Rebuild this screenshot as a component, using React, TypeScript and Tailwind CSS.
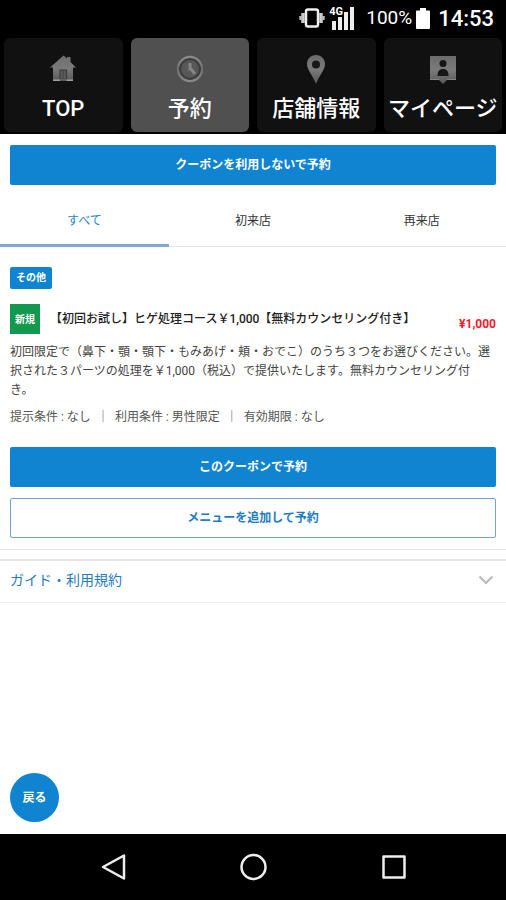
import { useState, type ReactNode } from "react";

/* ─────────────────────────────────────────────────────────────────── */
/*  Icons                                                              */
/* ─────────────────────────────────────────────────────────────────── */

function IconGradient({ id }: { id: string }) {
  return (
    <defs>
      <linearGradient id={id} x1="0" y1="0" x2="0" y2="1">
        <stop offset="0" stopColor="#6c6c6c" />
        <stop offset="0.5" stopColor="#7a7a7a" />
        <stop offset="1" stopColor="#585858" />
      </linearGradient>
    </defs>
  );
}

function HomeIcon() {
  return (
    <svg viewBox="0 0 30 30" className="size-[30px]" aria-hidden="true">
      <IconGradient id="home" />
      <path
        d="M15.500 1.500 L19 4.500 V3 H22.500 V8 L28 13.500 H25 V27 H5 V13.500 H2 Z"
        fill="url(#home)"
      />
      <path d="M12 25 V16 H18.500 V25" fill="#5a5a5a" stroke="#3c3c3c" strokeWidth="1.200" />
      <path d="M15.200 16 V25" stroke="#444" strokeWidth="1" />
      <path d="M5 26.200 H12 M18.500 26.200 H25" stroke="#a0a0a0" strokeWidth="1.500" />
    </svg>
  );
}

function ClockIcon() {
  return (
    <svg viewBox="0 0 30 30" className="size-[30px]" aria-hidden="true">
      <defs>
        <linearGradient id="clock" x1="0" y1="0" x2="0" y2="1">
          <stop offset="0" stopColor="#8c8c8c" />
          <stop offset="0.5" stopColor="#6c6c6c" />
          <stop offset="1" stopColor="#8a8a8a" />
        </linearGradient>
      </defs>
      <circle cx="15" cy="15" r="12" fill="#4a4a4a" stroke="url(#clock)" strokeWidth="2.500" />
      <circle cx="15" cy="15" r="10" fill="none" stroke="#3c3c3c" strokeWidth="1.500" />
      <circle cx="15" cy="15" r="8.500" fill="#585858" />
      <path d="M15 9 V15 H16 L20 20" fill="none" stroke="#858585" strokeWidth="3" />
    </svg>
  );
}

function PinIcon() {
  return (
    <svg viewBox="0 0 30 30" className="size-[30px]" aria-hidden="true">
      <IconGradient id="pin" />
      <path
        d="M15 1 C9.8 1 6 5 6 10 C6 16 12 21.500 15 30 C18 21.500 24 16 24 10 C24 5 20.200 1 15 1 Z"
        fill="url(#pin)"
      />
      <circle cx="15" cy="10.500" r="4" fill="#181818" />
    </svg>
  );
}

function PersonIcon() {
  return (
    <svg viewBox="0 0 30 30" className="size-[30px]" aria-hidden="true">
      <IconGradient id="person" />
      <path d="M2 2 H28 V26 H19 L15 30 L11 26 H2 Z" fill="url(#person)" />
      <path d="M2 25.500 H11 M19 25.500 H28" stroke="#858585" strokeWidth="1" />
      <circle cx="15" cy="9.500" r="3.500" fill="#161616" />
      <path d="M9.500 22 C9.500 16.500 12 15 15 15 C18 15 20.500 16.500 20.500 22 Z" fill="#161616" />
    </svg>
  );
}

function VibrateIcon() {
  return (
    <svg viewBox="0 0 26 20" className="h-5 w-[26px]" aria-hidden="true">
      <rect x="7" y="1.500" width="12" height="17" rx="2" fill="none" stroke="#eee" strokeWidth="2.500" />
      <path d="M4 5 V15 M22 5 V15" stroke="#ccc" strokeWidth="3.500" />
      <path d="M1.500 8 V12 M24.500 8 V12" stroke="#bbb" strokeWidth="2.500" />
    </svg>
  );
}

function SignalIcon() {
  return (
    <svg viewBox="0 0 25 24" className="h-6 w-[25px]" aria-hidden="true">
      <path d="M3 15 H7 V24 H3 Z M9 11 H13 V24 H9 Z M15 6 H19 V24 H15 Z M21 1 H25 V24 H21 Z" fill="#eee" />
    </svg>
  );
}

function BatteryIcon() {
  return (
    <svg viewBox="0 0 14 21" className="h-[21px] w-3.5" aria-hidden="true">
      <path d="M4 0 H10 V2.500 H13 Q14 2.500 14 3.500 V20 Q14 21 13 21 H1 Q0 21 0 20 V3.500 Q0 2.500 1 2.500 H4 Z" fill="#fff" />
    </svg>
  );
}

/* ─────────────────────────────────────────────────────────────────── */
/*  Data                                                               */
/* ─────────────────────────────────────────────────────────────────── */

const NAV_ITEMS: { label: string; icon: ReactNode; active?: boolean }[] = [
  { label: "TOP", icon: <HomeIcon /> },
  { label: "予約", icon: <ClockIcon />, active: true },
  { label: "店舗情報", icon: <PinIcon /> },
  { label: "マイページ", icon: <PersonIcon /> },
];

const TABS = ["すべて", "初来店", "再来店"];

/* ─────────────────────────────────────────────────────────────────── */
/*  Sections                                                           */
/* ─────────────────────────────────────────────────────────────────── */

function StatusBar() {
  return (
    <div className="flex h-9 items-center justify-end pr-3 font-medium text-white">
      <VibrateIcon />
      <div className="relative ml-1 flex">
        <SignalIcon />
        <span className="absolute top-0 left-0 text-[11px] leading-none font-bold [text-shadow:0_0_2px_#000]">
          4G
        </span>
      </div>
      <span className="ml-3 text-[19px] font-normal">100%</span>
      <span className="ml-1">
        <BatteryIcon />
      </span>
      <span className="ml-2 text-[22px]">14:53</span>
    </div>
  );
}

function MainNav() {
  return (
    <nav className="grid grid-cols-4 gap-2 px-1 pt-0.5 pb-0.5">
      {NAV_ITEMS.map((item) => (
        <a
          key={item.label}
          href="#"
          className={`flex h-[94px] flex-col items-center rounded-md pt-4 text-white ${
            item.active ? "bg-[#505050]" : "bg-[#111111]"
          }`}
        >
          {item.icon}
          <span className="mt-[9px] text-[22px] leading-8 font-medium whitespace-nowrap">
            {item.label}
          </span>
        </a>
      ))}
    </nav>
  );
}

function CouponTabs() {
  const [selected, setSelected] = useState(0);

  return (
    <div role="tablist" className="mt-2 grid grid-cols-3 border-b border-[#e6e6e6]">
      {TABS.map((tab, i) => (
        <button
          key={tab}
          type="button"
          role="tab"
          aria-selected={i === selected}
          onClick={() => setSelected(i)}
          className={`-mb-px h-[54px] border-b-3 pt-4 pb-3 text-xs leading-[22px] ${
            i === selected
              ? "border-[#82a8d8] text-[#1c85cf]"
              : "border-transparent text-[#333]"
          }`}
        >
          {tab}
        </button>
      ))}
    </div>
  );
}

function Coupon() {
  return (
    <article className="px-2.5 pt-[17px] pb-[11px]">
      <span className="inline-block rounded-xs bg-[#1084d0] px-1.5 text-[10px] leading-[22px] font-bold text-white">
        その他
      </span>

      {/* Title and price */}
      <div className="mt-[15px] flex">
        <span className="flex size-[30px] shrink-0 items-center justify-center bg-[#12994d] text-[10px] font-bold text-white">
          新規
        </span>
        <h2 className="ml-2.5 text-xs leading-[30px] font-medium whitespace-nowrap text-[#222]">
          【初回お試し】ヒゲ処理コース￥1,000【無料カウンセリング付き】
        </h2>
        <span className="ml-auto self-end text-xs leading-5 font-bold text-[#f51b28]">
          ¥1,000
        </span>
      </div>

      <p className="mt-[9px] pr-1 text-xs leading-[19px] text-[#444]">
        初回限定で（鼻下・顎・顎下・もみあげ・頬・おでこ）のうち３つをお選びください。選択された３パーツの処理を￥1,000（税込）で提供いたします。無料カウンセリング付き。
      </p>
      <p className="mt-2 flex flex-wrap gap-x-1.5 text-xs leading-[19px] text-[#555]">
        <span>提示条件 : なし</span>
        <span>｜</span>
        <span>利用条件 : 男性限定</span>
        <span>｜</span>
        <span>有効期限 : なし</span>
      </p>

      {/* Actions */}
      <button
        type="button"
        className="mt-5 h-10 w-full rounded-xs bg-[#1084d0] text-xs font-bold text-white"
      >
        このクーポンで予約
      </button>
      <button
        type="button"
        className="mt-[11px] h-10 w-full rounded-xs border border-[#6fa3da] bg-white text-xs font-bold text-[#1c7cc4]"
      >
        メニューを追加して予約
      </button>
    </article>
  );
}

function SystemBar() {
  return (
    <div className="grid h-[66px] shrink-0 grid-cols-3 place-items-center bg-black px-[43px] text-[#eee]">
      <button type="button" aria-label="Back">
        <svg viewBox="0 0 28 28" className="size-7" fill="none" stroke="currentColor" strokeWidth="2.500" strokeLinejoin="round">
          <path d="M25 2.500 V25.500 L4 14 Z" />
        </svg>
      </button>
      <button type="button" aria-label="Home">
        <svg viewBox="0 0 28 28" className="size-7" fill="none" stroke="currentColor" strokeWidth="2.500">
          <circle cx="14.500" cy="14" r="12" />
        </svg>
      </button>
      <button type="button" aria-label="Recent apps">
        <svg viewBox="0 0 28 28" className="size-7" fill="none" stroke="currentColor" strokeWidth="2.500" strokeLinejoin="round">
          <rect x="4.500" y="3.500" width="21" height="21" />
        </svg>
      </button>
    </div>
  );
}

/* ─────────────────────────────────────────────────────────────────── */
/*  Page                                                               */
/* ─────────────────────────────────────────────────────────────────── */

export default function App() {
  return (
    <div
      lang="ja"
      className="flex min-h-screen flex-col bg-white font-[Roboto,'Noto_Sans_CJK_JP',sans-serif]"
    >
      <header className="bg-black">
        <StatusBar />
        <MainNav />
      </header>

      <main className="flex grow flex-col">
        <div className="px-2.5 pt-[11px]">
          <button
            type="button"
            className="h-10 w-full rounded-xs bg-[#1084d0] text-xs font-bold text-white"
          >
            クーポンを利用しないで予約
          </button>
        </div>

        <CouponTabs />
        <Coupon />

        <div className="h-3 border-t border-b-2 border-[#e8e8e8]" />
        <button
          type="button"
          className="flex h-[42px] items-center justify-between border-b border-[#eee] px-2.5 pb-1 text-sm text-[#1c7cc4]"
        >
          ガイド・利用規約
          <svg viewBox="0 0 16 10" className="mr-0.5 h-2.5 w-4" fill="none" stroke="#b8b8b8" strokeWidth="2" aria-hidden="true">
            <path d="M1.500 1.500 L8 8 L14.500 1.500" />
          </svg>
        </button>

        <button
          type="button"
          className="mt-auto mb-3 ml-2.5 size-[49px] rounded-full bg-[#1084d0] text-xs font-bold text-white"
        >
          戻る
        </button>
      </main>

      <SystemBar />
    </div>
  );
}
